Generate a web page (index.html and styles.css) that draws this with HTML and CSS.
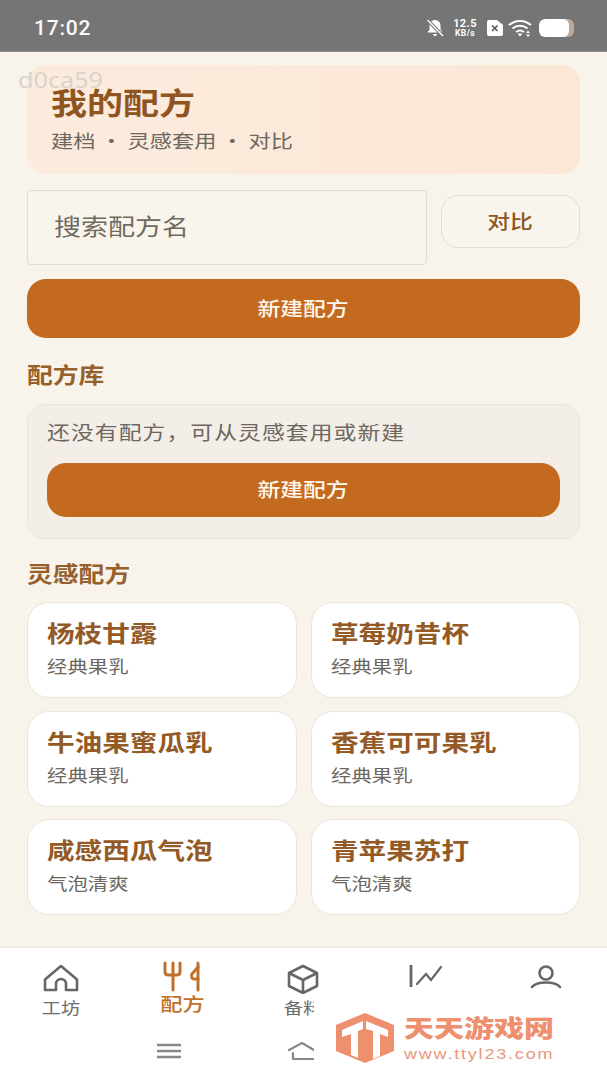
FILE: index.html
```html
<!DOCTYPE html>
<html lang="zh-CN">
<head>
    <meta charset="UTF-8">
    <meta name="viewport" content="width=device-width, initial-scale=1.0">
    <title>我的配方</title>
    <link rel="stylesheet" href="styles.css">
</head>
<body>
    <div class="status-bar">
        <span class="clock">17:02</span>
        <div class="status-icons">
            <svg class="ic-bell" width="18" height="18" viewBox="0 0 18 18"><path d="M9 1c-3.200 0-5.500 2.400-5.500 5.500v4L1.500 13.500h15l-2-3v-4C14.500 3.400 12.200 1 9 1z" fill="#fff"/><path d="M6.500 15h5L9 17.500z" fill="#fff"/><path d="M1.500 1 17 17" stroke="#757575" stroke-width="3.400"/><path d="M1.500 1 17 17" stroke="#fff" stroke-width="1.400"/></svg>
            <div class="net-speed"><span>12.5</span><span class="net-unit">KB/s</span></div>
            <svg class="ic-sim" width="16" height="16" viewBox="0 0 16 16"><path d="M2 0h8l6 5v9a2 2 0 0 1-2 2H2a2 2 0 0 1-2-2V2a2 2 0 0 1 2-2z" fill="#fff"/><path d="M5 5.500l5.500 5.500M10.500 5.500 5 11" stroke="#555" stroke-width="1.600"/></svg>
            <svg class="ic-wifi" width="25" height="18" viewBox="0 0 25 18" fill="none" stroke="#fff" stroke-width="2"><path d="M1 6c6.500-5.500 15.500-5.500 22 0"/><path d="M4.500 9.500c4.500-3.600 10.500-3.600 15 0"/><path d="M8 13c2.500-1.800 5.500-1.800 8 0"/><path d="M9.500 14.500l2.500 3 2.500-3z" fill="#fff" stroke="none"/><path d="M20 11.500l2 2.500h-4zM20 18l2-2.500h-4z" fill="#fff" stroke="none"/></svg>
            <div class="battery"><div class="battery-fill"></div></div>
        </div>
    </div>

    <main class="page">
        <span class="debug-tag">d0ca59</span>
        <section class="hero">
            <h1>我的配方</h1>
            <p>建档 · 灵感套用 · 对比</p>
        </section>

        <div class="search-row">
            <div class="search-box"><span class="wide-text">搜索配方名</span></div>
            <button class="btn-compare"><span class="wide-center">对比</span></button>
        </div>

        <button class="btn-primary"><span class="wide-center">新建配方</span></button>

        <h2 class="section-title">配方库</h2>
        <div class="empty-card">
            <p>还没有配方，可从灵感套用或新建</p>
            <button class="btn-primary btn-small"><span class="wide-center">新建配方</span></button>
        </div>

        <h2 class="section-title section-title-2">灵感配方</h2>
        <div class="recipe-grid">
            <div class="recipe-card"><h3>杨枝甘露</h3><p>经典果乳</p></div>
            <div class="recipe-card"><h3>草莓奶昔杯</h3><p>经典果乳</p></div>
            <div class="recipe-card"><h3>牛油果蜜瓜乳</h3><p>经典果乳</p></div>
            <div class="recipe-card"><h3>香蕉可可果乳</h3><p>经典果乳</p></div>
            <div class="recipe-card"><h3>咸感西瓜气泡</h3><p>气泡清爽</p></div>
            <div class="recipe-card"><h3>青苹果苏打</h3><p>气泡清爽</p></div>
        </div>
    </main>

    <nav class="tab-bar">
        <div class="tabs">
            <div class="tab">
                <svg width="36" height="30" viewBox="0 0 36 30" fill="none" stroke="#666" stroke-width="2.600" stroke-linejoin="round"><path d="M18 2 2 15.500V26h11v-6a5 5 0 0 1 10 0v6h11V15.500z"/></svg>
                <span class="wide-center">工坊</span>
            </div>
            <div class="tab tab-active">
                <svg width="40" height="32" viewBox="0 0 40 32" fill="none" stroke="#c0702a" stroke-width="3" stroke-linecap="round" stroke-linejoin="round"><path d="M3 2v9c0 2 1.500 3 3.500 3h8c2 0 3.500-1 3.500-3V2"/><path d="M11 2v27"/><path d="M36 2v27"/><path d="M36 6l-6 7c-1 1.500-.5 5 2 5h4"/></svg>
                <span class="wide-center">配方</span>
            </div>
            <div class="tab">
                <svg width="34" height="30" viewBox="0 0 34 30" fill="none" stroke="#666" stroke-width="2.600" stroke-linejoin="round"><path d="M17 2 31 9v13l-14 7-14-7V9z"/><path d="M3 9l14 7 14-7M17 16v13"/></svg>
                <span class="wide-center">备料</span>
            </div>
            <div class="tab">
                <svg width="36" height="30" viewBox="0 0 36 30" fill="none" stroke="#666" stroke-linecap="round"><path d="M4 1v22" stroke-width="2.800" stroke-linecap="butt"/><path d="M10 20l9-10 5 6 10-13" stroke-width="2.200"/></svg>
            </div>
            <div class="tab">
                <svg width="34" height="30" viewBox="0 0 34 30" fill="none" stroke="#666" stroke-width="2.600"><circle cx="17" cy="9" r="6.500"/><path d="M3 23c3-3.500 8-4.500 14-4.500S28 19.500 31 23" stroke-linecap="round"/></svg>
            </div>
        </div>
        <div class="gesture-row">
            <svg width="26" height="16" viewBox="0 0 26 16" fill="none" stroke="#888" stroke-width="2.400"><path d="M1 2h24M1 8h24M1 14h24"/></svg>
            <svg width="28" height="20" viewBox="0 0 28 20" fill="none" stroke="#888" stroke-width="2.200" stroke-linecap="round" stroke-linejoin="round"><path d="M1 9 14 2l12 7"/><path d="M5 12v6h21"/></svg>
        </div>
    </nav>

    <div class="watermark">
        <svg class="wm-logo" width="58" height="50" viewBox="0 0 58 50"><path d="M29 0 58 12v26L29 50 0 38V12z" fill="#ee8f6e"/><path d="M6 17 27 8v8l-5 2v27l-7-3V21l-9 3z" fill="#fff"/><path d="M30 8l22 9v7l-8-3v22l-7 3V18l-7-2z" fill="#fff"/></svg>
        <div class="wm-text">
            <div class="wm-name">天天游戏网</div>
            <div class="wm-url">www.ttyl23.com</div>
        </div>
    </div>
</body>
</html>
```

FILE: styles.css
```css
* { box-sizing: border-box; }
body { margin: 0; width: 607px; height: 1080px; overflow: hidden; display: flex; flex-direction: column; position: relative; background: #f8f4ec; font-family: "Noto Sans CJK SC", "Noto Sans", sans-serif; }
h1, h2, h3, p { margin: 0; }
button { font-family: inherit; border: none; padding: 0; }

/* the reference text is about 1.2x wider than tall */
.wide-text, .hero h1, .hero p, .section-title, .empty-card p, .recipe-card h3, .recipe-card p, .wm-name, .wm-url, .debug-tag { width: fit-content; transform: scaleX(1.2); transform-origin: 0 50%; }
.wide-text, .wide-center { display: inline-block; }
.wide-center { transform: scaleX(1.2); }

.status-bar { height: 52px; flex: none; background: #757575; display: flex; align-items: center; justify-content: space-between; padding: 5px 33px 0 34px; border-bottom: 1px solid #8d8d8b; }
.clock { font-family: Roboto, sans-serif; font-size: 21px; font-weight: 500; letter-spacing: 0.8px; color: #fbfbfb; }
.status-icons { display: flex; align-items: center; }
.ic-bell { margin-right: 8px; }
.net-speed { display: flex; flex-direction: column; align-items: center; width: 26px; font-family: Roboto, sans-serif; font-size: 11px; font-weight: 700; line-height: 10px; letter-spacing: 0.4px; color: #fff; margin-right: 9px; }
.net-unit { font-size: 8.500px; line-height: 8px; }
.ic-sim { margin-right: 5px; }
.ic-wifi { margin-right: 6px; }
.battery { width: 35px; height: 18px; background: #bfa999; border-radius: 6px; overflow: hidden; }
.battery-fill { width: 30px; height: 100%; background: #fff; border-radius: 6px; }

.page { flex: 1; padding: 13px 27px 0; position: relative; }
.debug-tag { position: absolute; left: 18px; top: 13px; font-family: "Noto Sans", sans-serif; font-size: 21px; line-height: 30px; color: #d8d4cc; z-index: 1; }

.hero { height: 109px; background: linear-gradient(90deg, #fcebdd, #fbe7d6); border-radius: 18px; padding: 16px 24px 0; }
.hero h1 { font-size: 30px; line-height: 40px; font-weight: 700; color: #8f5520; }
.hero p { font-size: 18.500px; line-height: 30px; margin-top: 4px; color: #6d675e; }

.search-row { display: flex; align-items: flex-start; margin-top: 16px; }
.search-box { width: 400px; height: 75px; border: 1.500px solid #e2ddcf; border-radius: 4px; background: #f9f5ec; padding-left: 26px; font-size: 22.500px; line-height: 68px; color: #6e6a60; }
.btn-compare { width: 139px; height: 53px; margin: 5px 0 0 14px; background: #f9f5ec; border: 1.500px solid #e2ddcf; border-radius: 17px; padding-bottom: 3px; font-size: 19px; font-weight: 500; color: #8f5520; }

.btn-primary { display: block; width: 100%; height: 59px; margin-top: 14px; padding-bottom: 3px; background: #c46a1e; border-radius: 19px; color: #fff8ee; font-size: 19px; font-weight: 500; }

.section-title { font-size: 21.500px; line-height: 32px; font-weight: 700; color: #96602b; margin: 20px 0 14px 0; }
.section-title-2 { margin: 18px 0 13px 0; }

.empty-card { height: 135px; background: #f3eee7; border: 1.500px solid #ebe6dc; border-radius: 18px; padding: 12px 19px 0; }
.empty-card p { font-size: 19px; line-height: 30px; letter-spacing: 0.9px; color: #6d675e; }
.btn-small { height: 54px; margin-top: 16px; }

.recipe-grid { display: grid; grid-template-columns: 270px 269px; column-gap: 14px; row-gap: 12.500px; }
.recipe-card { height: 96px; background: #fff; border: 1.500px solid #ebe6da; border-radius: 22px; padding: 12px 19px 0; }
.recipe-card h3 { font-size: 23px; line-height: 34px; font-weight: 700; color: #935a26; }
.recipe-card p { font-size: 17px; line-height: 26px; margin-top: 4px; color: #6d675e; }

.tab-bar { height: 134px; flex: none; background: #fff; border-top: 2px solid #efece6; }
.tabs { display: flex; height: 88px; }
.tab { width: 121.400px; display: flex; flex-direction: column; align-items: center; padding-top: 16px; color: #6d6d6d; font-size: 16px; line-height: 26px; }
.tab svg { display: block; height: 30px; }
.tab-active { color: #c0702a; font-size: 18.500px; font-weight: 500; padding-top: 13px; }
.tab-active svg { height: 32px; }
.tab-active span { margin-top: -3px; }

.gesture-row { display: flex; align-items: center; gap: 106px; padding: 5px 0 0 156px; }

.watermark { position: absolute; left: 314px; top: 995px; width: 293px; height: 85px; background: #fff; display: flex; padding: 18px 0 0 22px; }
.wm-logo { flex: none; }
.wm-text { margin-left: 10px; }
.wm-name { font-size: 24px; line-height: 26px; margin-top: 1px; font-weight: 900; color: #ee8f6e; white-space: nowrap; transform: scaleX(1.25); }
.wm-url { font-family: "Liberation Sans", sans-serif; font-size: 15px; line-height: 17px; margin-top: 5px; letter-spacing: 1.500px; color: #e8977c; white-space: nowrap; }
```
